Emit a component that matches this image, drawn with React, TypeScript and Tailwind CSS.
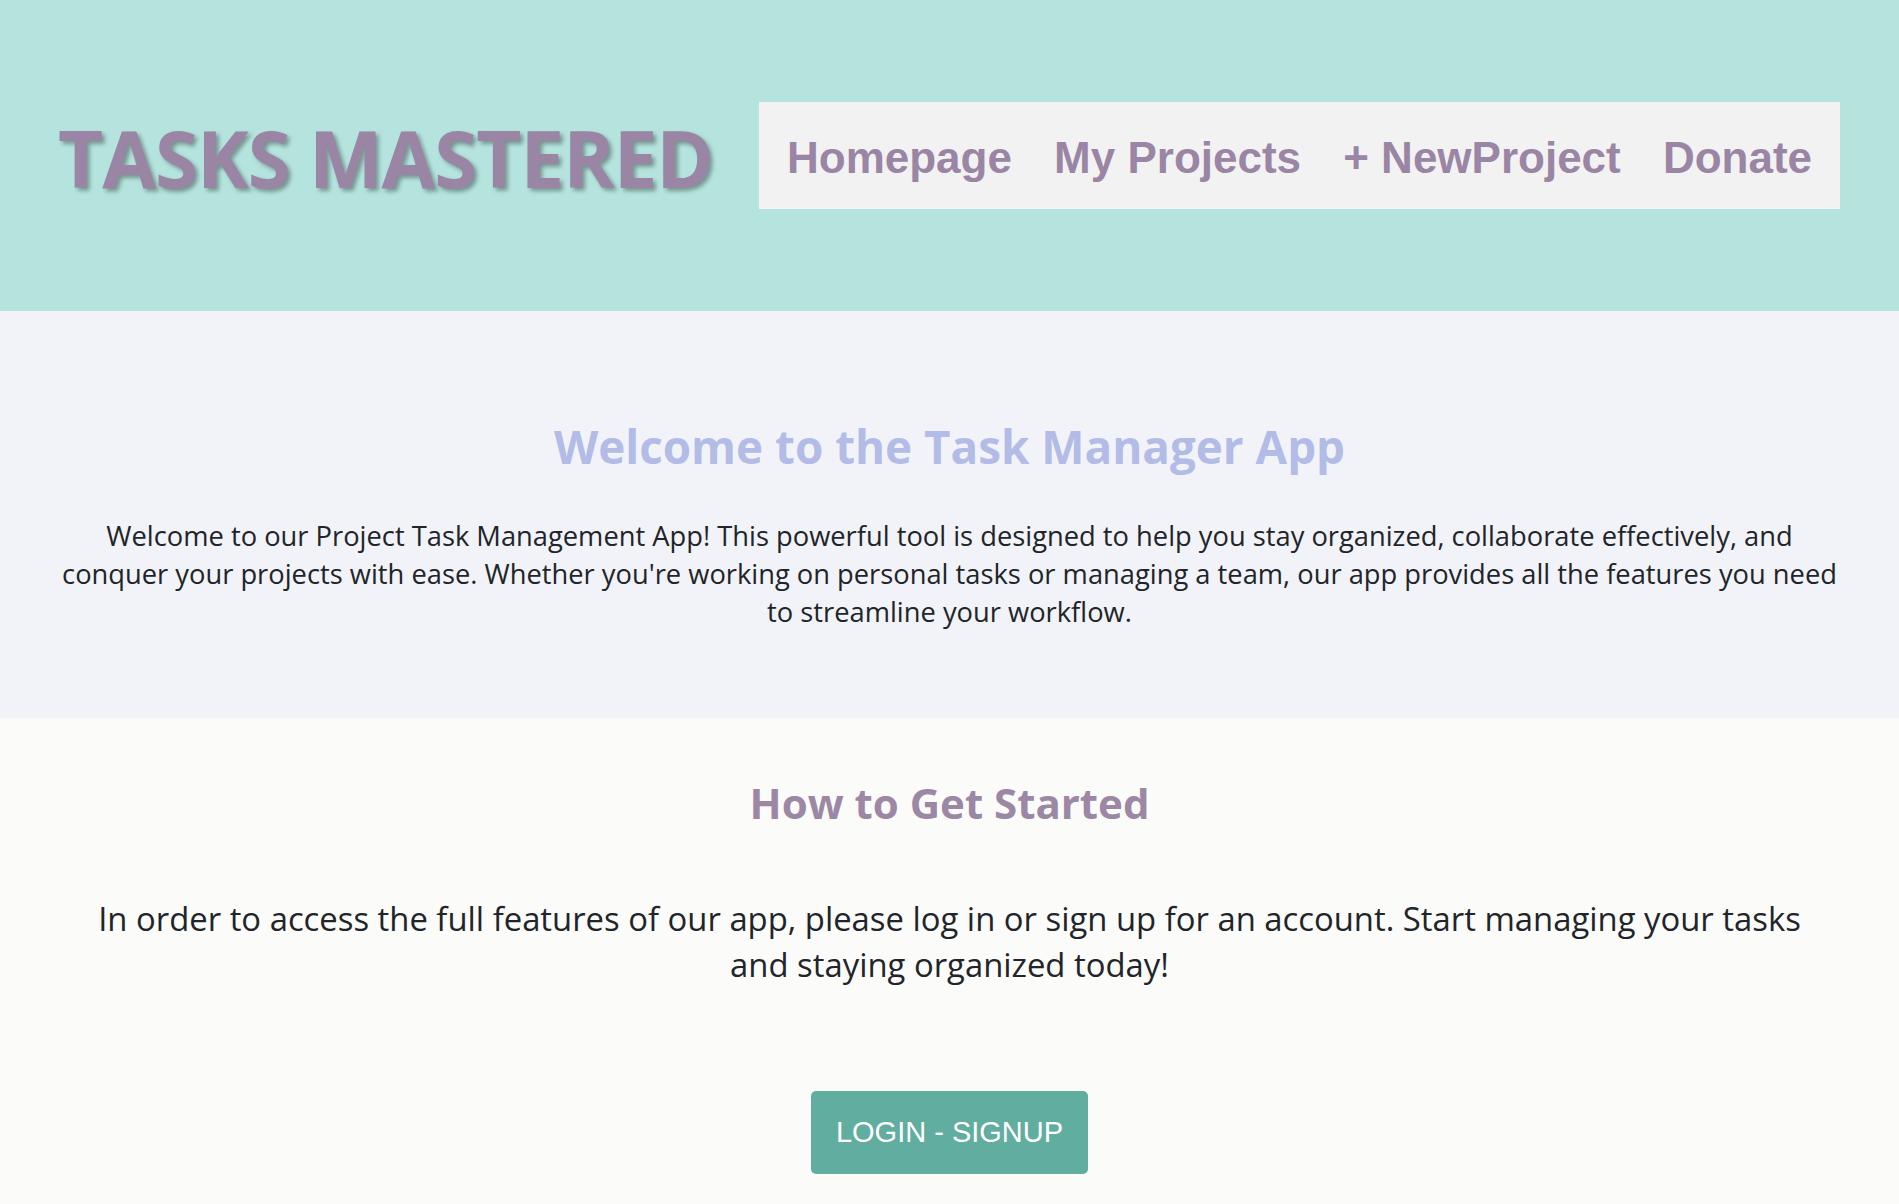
import React from "react";

export default function App() {
  return (
    <div className="w-full min-h-[1204px] flex flex-col bg-[#fbfbfa]" style={{ fontFamily: '"Open Sans", sans-serif' }}>
      <header className="h-[311px] bg-[#b5e4de] flex items-center justify-between pl-[58px] pr-[59px]">
        <h1
          className="text-[78px] font-bold leading-none tracking-[-1px] text-[#9a86a4] [text-shadow:3px_3px_4px_rgba(0,0,0,0.35)] whitespace-nowrap pt-[4px]"
          style={{ fontFamily: '"Open Sans", sans-serif' }}
        >
          TASKS MASTERED
        </h1>
        <nav className="h-[107px] w-[1081px] bg-[#f2f2f2] flex items-center justify-between px-[28px] pt-[4px]">
          {["Homepage", "My Projects", "+ NewProject", "Donate"].map((t) => (
            <a
              key={t}
              className="text-[44px] font-bold text-[#9a86a4] whitespace-nowrap"
              style={{ fontFamily: '"Liberation Sans", Arial, sans-serif' }}
            >
              {t}
            </a>
          ))}
        </nav>
      </header>

      <section className="h-[407px] bg-[#f2f3f8] flex flex-col items-center pt-[108px] px-[40px]">
        <h2 className="text-[45.8px] leading-[55px] font-bold text-[#b2bce6] whitespace-nowrap">
          Welcome to the Task Manager App
        </h2>
        <p className="mt-[43px] text-[27.3px] leading-[38px] text-[#212529] text-center">
          Welcome to our Project Task Management App! This powerful tool is designed to help you stay organized, collaborate effectively, and
          <br />
          conquer your projects with ease. Whether you're working on personal tasks or managing a team, our app provides all the features you need
          <br />
          to streamline your workflow.
        </p>
      </section>

      <section className="flex-1 bg-[#fbfbfa] flex flex-col items-center pt-[58px] pb-[30px] px-[40px]">
        <h2 className="text-[42px] leading-[53px] font-bold text-[#9c87a5] whitespace-nowrap">How to Get Started</h2>
        <p className="mt-[67px] text-[32.85px] leading-[46px] text-[#212529] text-center">
          In order to access the full features of our app, please log in or sign up for an account. Start managing your tasks
          <br />
          and staying organized today!
        </p>
        <button
          className="mt-[103px] w-[277px] h-[83px] rounded-[5px] bg-[#61ada0] text-white text-[29px] flex items-center justify-center"
          style={{ fontFamily: '"Liberation Sans", Arial, sans-serif' }}
        >
          LOGIN - SIGNUP
        </button>
      </section>
    </div>
  );
}
